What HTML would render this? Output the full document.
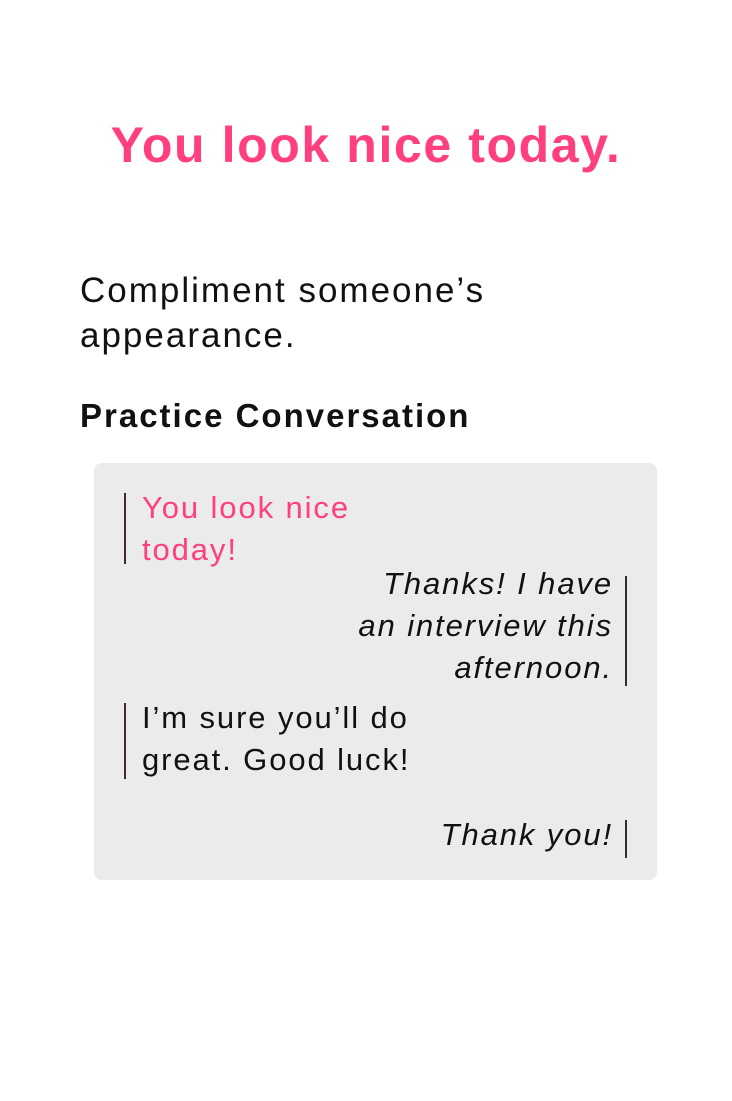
<!DOCTYPE html>
<html><head><meta charset="utf-8"><style>
html,body{margin:0;padding:0;background:#fff;}
body{width:732px;height:1101px;position:relative;overflow:hidden;font-family:"Liberation Sans",sans-serif;}
.a{position:absolute;white-space:nowrap;}
.title{left:0;width:732px;text-align:center;top:116px;font-size:50px;font-weight:bold;color:#ff3f80;letter-spacing:1.6px;}
.body{left:80px;top:268px;font-size:35px;line-height:45px;color:#111;letter-spacing:2px;}
.h{left:80px;top:397px;font-size:33px;font-weight:bold;color:#111;letter-spacing:2px;}
.box{position:absolute;left:94px;top:463px;width:563px;height:417px;background:#ebebeb;border-radius:8px;}
.bar{position:absolute;width:2px;background:#3b2c2c;}
.t{position:absolute;font-size:31px;line-height:42px;white-space:nowrap;color:#111;letter-spacing:1.9px;}
.r{text-align:right;font-style:italic;right:119px;}
</style></head><body>
<div class="a title">You look nice today.</div>
<div class="a body">Compliment someone’s<br>appearance.</div>
<div class="a h">Practice Conversation</div>
<div class="box"></div>
<div class="bar" style="left:124px;top:493px;height:71px"></div>
<div class="t" style="left:142px;top:487px;color:#ff3f80">You look nice<br>today!</div>
<div class="bar" style="left:625px;top:576px;height:110px"></div>
<div class="t r" style="top:563px">Thanks! I have<br>an interview this<br>afternoon.</div>
<div class="bar" style="left:124px;top:703px;height:76px"></div>
<div class="t" style="left:142px;top:697px">I’m sure you’ll do<br>great. Good luck!</div>
<div class="bar" style="left:625px;top:820px;height:38px"></div>
<div class="t r" style="top:814px">Thank you!</div>
</body></html>
